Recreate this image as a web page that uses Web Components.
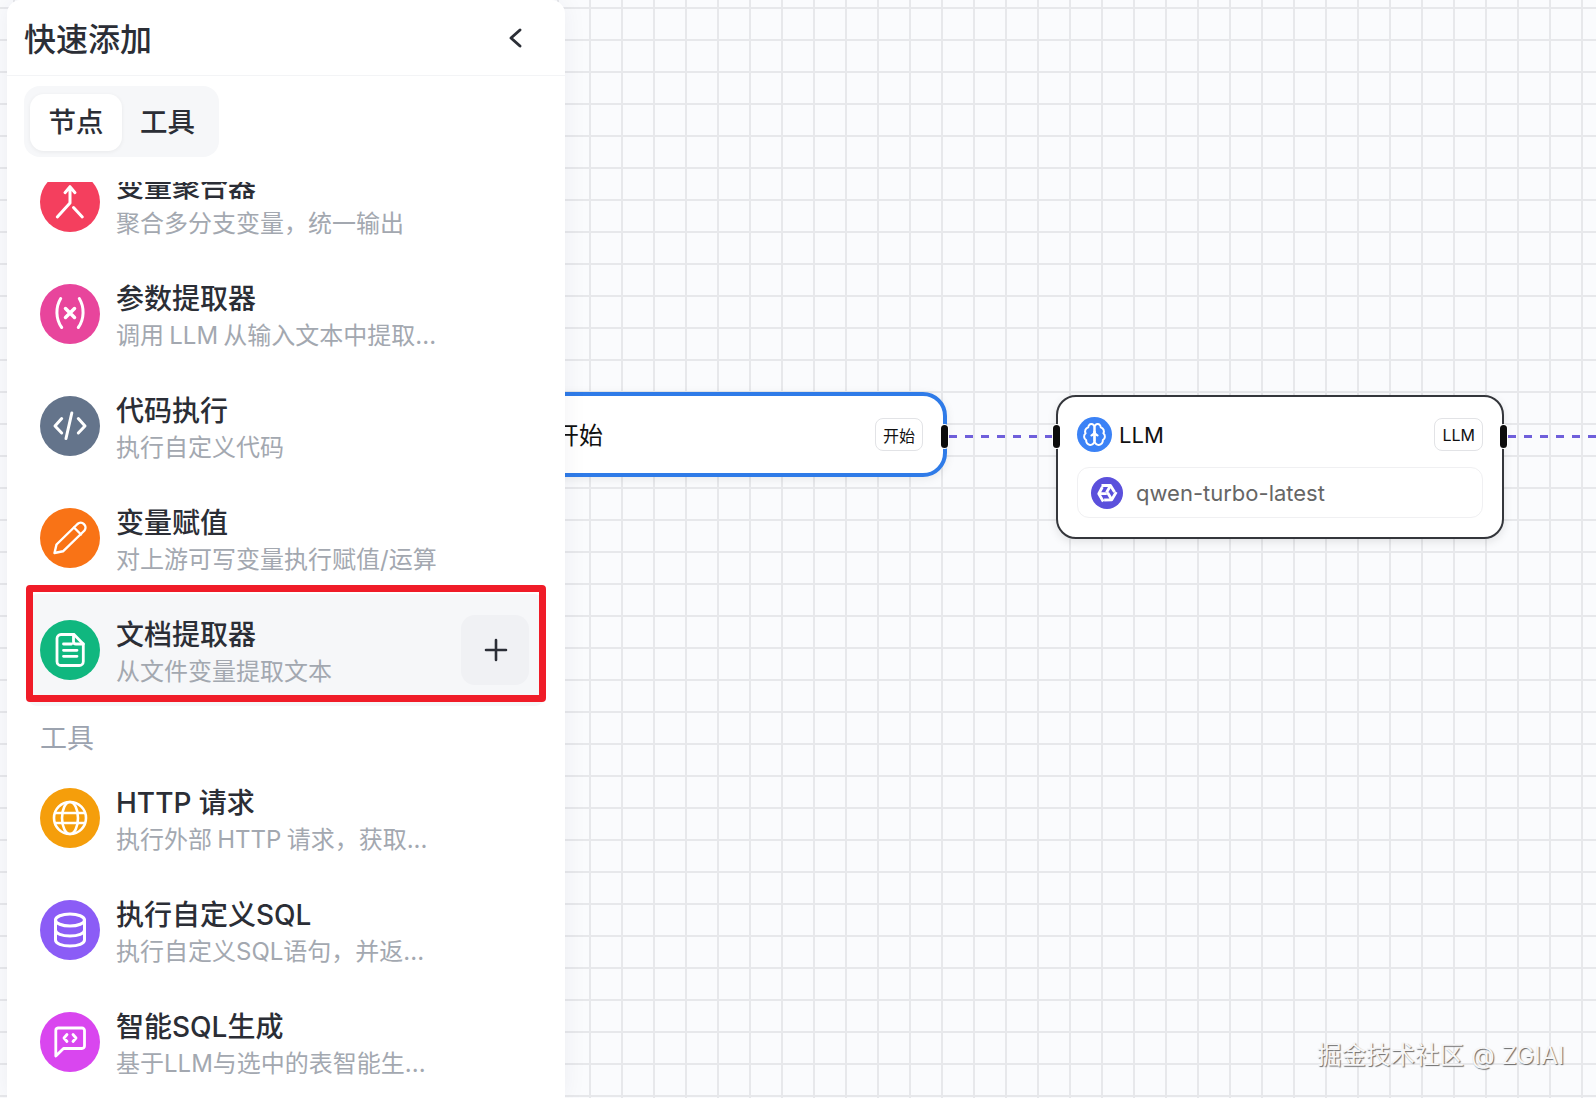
<!DOCTYPE html>
<html lang="zh">
<head>
<meta charset="utf-8">
<title>快速添加</title>
<style>
  html, body { margin: 0; height: 100%; overflow: hidden; }
  body { font-family: Inter, "Noto Sans CJK SC", sans-serif; }
</style>
</head>
<body>
<flow-app>
  <quick-panel slot="panel" heading="快速添加">
    <node-row name="变量聚合器" desc="聚合多分支变量，统一输出" color="#f43f5e" icon="merge"></node-row>
    <node-row name="参数提取器" desc="调用 LLM 从输入文本中提取..." color="#e8459c" icon="params"></node-row>
    <node-row name="代码执行" desc="执行自定义代码" color="#64748b" icon="code"></node-row>
    <node-row name="变量赋值" desc="对上游可写变量执行赋值/运算" color="#f97316" icon="pencil"></node-row>
    <node-row name="文档提取器" desc="从文件变量提取文本" color="#10b77f" icon="doc" active></node-row>
    <section-label>工具</section-label>
    <node-row name="HTTP 请求" desc="执行外部 HTTP 请求，获取..." color="#f59e0b" icon="globe"></node-row>
    <node-row name="执行自定义SQL" desc="执行自定义SQL语句，并返..." color="#8b5cf6" icon="db"></node-row>
    <node-row name="智能SQL生成" desc="基于LLM与选中的表智能生..." color="#d946ef" icon="chat"></node-row>
  </quick-panel>
</flow-app>

<script>
const ROW_ICONS = {
  merge: '<path d="M25 20.7 30 14.7 35 20.7M30 15V31L17.3 45M33.5 35.5 42.3 45"/>',
  params: '<path d="M20.7 14.5C15.5 23 15.5 35 21.7 43.5M39.3 14.5C44.5 23 44.5 35 38.3 43.5"/><path stroke-width="3.5" d="M25.5 24.5 34.5 33.5M34.5 24.5 25.5 33.5"/>',
  code: '<path d="M21.7 22.5 15 30 21.7 37M38.3 22.5 45 30 38.3 37M31.8 17 26 42.5"/>',
  pencil: '<path stroke-width="2.4" d="M14.5 45 16.5 36.5 37.5 16A4.8 4.8 0 0 1 44.5 22.5L23 43.3Z"/><path stroke-width="2.4" d="M34 19.5 41 26.5"/>',
  doc: '<path stroke-width="2.8" d="M21 14.5H34L43.3 24V41.5A4 4 0 0 1 39.3 45.5H21A4 4 0 0 1 17 41.5V18.5A4 4 0 0 1 21 14.5Z"/><path stroke-width="2.8" d="M33.5 14.5V21.5A2.5 2.5 0 0 0 36 24H43.3M23.5 24H31.5M23.5 30.3H37M23.5 36.3H37"/>',
  globe: '<g stroke-width="2.6"><circle cx="30" cy="30" r="16"/><ellipse cx="30" cy="30" rx="8" ry="16"/><path d="M15 25H45M15 35H45"/></g>',
  db: '<ellipse cx="30" cy="20" rx="14.5" ry="6"/><path d="M15.5 20V40C15.5 43.5 22 46 30 46S44.5 43.5 44.5 40V20M15.5 30C15.5 33.5 22 36 30 36S44.5 33.5 44.5 30"/>',
  chat: '<path stroke-width="2.8" d="M18 16H42A2.5 2.5 0 0 1 44.5 18.5V34A2.5 2.5 0 0 1 42 36.5H23.5L15.8 44V18.5A2.5 2.5 0 0 1 18 16Z"/><path stroke-width="2.8" d="M27 22.5 24 26 27 29.5M33 22.5 36 26 33 29.5"/>'
};

class FlowApp extends HTMLElement {
  constructor () {
    super();
    this.attachShadow({ mode: 'open' });
  }

  static get styles () {
    return `
      :host {
        display: flex;
        position: relative;
        width: 100%;
        height: 1098px;
        overflow: hidden;
        padding-left: 7px;
        box-sizing: border-box;
        background-color: #fafbfd;
        background-image:
          linear-gradient(#e7e8eb 2px, transparent 2px),
          linear-gradient(90deg, #e7e8eb 2px, transparent 2px);
        background-size: 32px 32px;
        background-position: 13px 7px;
      }
      .edge {
        position: absolute;
        top: 435px;
        height: 3px;
        background: repeating-linear-gradient(90deg, #6f5fdb 0 8px, transparent 8px 16px);
      }
      .watermark {
        position: absolute;
        left: 1317px;
        top: 1039px;
        font-size: 24.5px;
        line-height: 32px;
        color: #f6f6f7;
        text-shadow: 1px 1px 1px #6b6b6b;
        white-space: nowrap;
      }
    `;
  }

  connectedCallback () {
    this.render();
  }

  render () {
    this.shadowRoot.innerHTML = `
    <style>${FlowApp.styles}</style>
    <div class="edge" style="left: 949px; width: 104px"></div>
    <div class="edge" style="left: 1508px; width: 90px"></div>
    <start-node></start-node>
    <llm-node></llm-node>
    <slot name="panel"></slot>
    <div class="watermark">掘金技术社区 @ ZGIAI</div>
    `;
  }
}

class FlowTag extends HTMLElement {
  constructor () {
    super();
    this.attachShadow({ mode: 'open' });
  }

  connectedCallback () {
    this.shadowRoot.innerHTML = `
    <style>
      :host {
        display: flex;
        align-items: center;
        justify-content: center;
        height: 33px;
        padding: 0 7px;
        box-sizing: border-box;
        border: 1.5px solid #e2e3e6;
        border-radius: 8px;
        background: #fff;
        color: #111;
        font-size: 16px;
      }
    </style>
    <slot></slot>
    `;
  }
}

class StartNode extends HTMLElement {
  constructor () {
    super();
    this.attachShadow({ mode: 'open' });
  }

  connectedCallback () {
    this.shadowRoot.innerHTML = `
    <style>
      :host {
        position: absolute;
        left: 400px;
        top: 392px;
        width: 547px;
        height: 85px;
        box-sizing: border-box;
        display: flex;
        align-items: center;
        justify-content: space-between;
        padding: 0 20px 0 151px;
        background: #fff;
        border: 4px solid #2f7be8;
        border-radius: 24px;
        box-shadow: 0 2px 10px rgba(0, 0, 0, .08);
        font-size: 24px;
        color: #111;
      }
      span { margin-top: -3px; }
      .handle {
        position: absolute;
        right: -5px;
        top: 29px;
        width: 7px;
        height: 23px;
        background: #0c0c0c;
        border-radius: 4px;
        box-shadow: 0 0 0 1px #fff;
      }
    </style>
    <span>开始</span>
    <flow-tag>开始</flow-tag>
    <div class="handle"></div>
    `;
  }
}

class LlmNode extends HTMLElement {
  constructor () {
    super();
    this.attachShadow({ mode: 'open' });
  }

  connectedCallback () {
    this.shadowRoot.innerHTML = `
    <style>
      :host {
        position: absolute;
        left: 1056px;
        top: 395px;
        width: 448px;
        height: 144px;
        box-sizing: border-box;
        padding: 20px 19px 0;
        background: #fff;
        border: 2px solid #34363b;
        border-radius: 20px;
        box-shadow: 0 3px 10px rgba(0, 0, 0, .1);
        color: #111;
      }
      .head { display: flex; align-items: center; height: 35px; }
      .brain {
        width: 35px;
        height: 35px;
        border-radius: 50%;
        background: #3b82f6;
        display: flex;
        align-items: center;
        justify-content: center;
      }
      .title { margin-left: 7px; flex: 1; font-size: 22px; }
      .model {
        display: flex;
        align-items: center;
        gap: 13px;
        height: 51px;
        margin-top: 15px;
        padding: 0 0 0 13px;
        box-sizing: border-box;
        border: 1.5px solid #f0f0f2;
        border-radius: 12px;
        color: #666;
        font-size: 22px;
      }
      .handle {
        position: absolute;
        top: 28px;
        width: 7px;
        height: 23px;
        background: #0c0c0c;
        border-radius: 4px;
        box-shadow: 0 0 0 1px #fff;
      }
    </style>
    <div class="head">
      <div class="brain">
        <svg width="25" height="25" viewBox="0 0 24 24" fill="none" stroke="#fff" stroke-width="1.9" stroke-linecap="round" stroke-linejoin="round">
          <path d="M12 5a3 3 0 1 0-5.997.125 4 4 0 0 0-2.526 5.77 4 4 0 0 0 .556 6.588A4 4 0 1 0 12 18Z"/>
          <path d="M12 5a3 3 0 1 1 5.997.125 4 4 0 0 1 2.526 5.77 4 4 0 0 1-.556 6.588A4 4 0 1 1 12 18Z"/>
          <path d="M15 13a4.5 4.5 0 0 1-3-4 4.5 4.5 0 0 1-3 4"/>
          <path d="M12 9V18"/>
        </svg>
      </div>
      <span class="title">LLM</span>
      <flow-tag>LLM</flow-tag>
    </div>
    <div class="model">
      <svg width="32" height="32" viewBox="0 0 32 32">
        <circle cx="16" cy="16" r="16" fill="#5b50dc"/>
        <g fill="none" stroke="#fff" stroke-width="2.8" stroke-linejoin="round">
          <path d="M10.5 8.5H19.5L23.5 15M19.5 8.5 15.5 15.5"/>
          <path d="M10.5 8.5H19.5L23.5 15M19.5 8.5 15.5 15.5" transform="rotate(120 16 16)"/>
          <path d="M10.5 8.5H19.5L23.5 15M19.5 8.5 15.5 15.5" transform="rotate(240 16 16)"/>
        </g>
      </svg>
      <span>qwen-turbo-latest</span>
    </div>
    <div class="handle" style="left: -5px"></div>
    <div class="handle" style="right: -5px"></div>
    `;
  }
}

class QuickPanel extends HTMLElement {
  constructor () {
    super();
    this.attachShadow({ mode: 'open' });
  }

  static get styles () {
    return `
      :host {
        position: relative;
        z-index: 2;
        display: flex;
        flex-direction: column;
        width: 558px;
        height: 100%;
        background: #fff;
        border-radius: 14px 14px 0 0;
        box-shadow: 0 0 24px rgba(20, 30, 60, .06);
      }
      header {
        flex: none;
        display: flex;
        align-items: center;
        justify-content: space-between;
        height: 76px;
        padding: 0 42px 2px 18px;
        box-sizing: border-box;
        border-bottom: 1.5px solid #f3f4f6;
        font-size: 32px;
        font-weight: 500;
        color: #2b2e36;
      }
      header span { margin-left: -1px; }
      header svg { margin-top: 2px; }
      .tabs {
        flex: none;
        align-self: flex-start;
        display: flex;
        margin: 10px 0 0 17px;
        padding: 8px 6px;
        height: 71px;
        box-sizing: border-box;
        border-radius: 16px;
        background: #f6f7f9;
        font-size: 27.5px;
        font-weight: 500;
        color: #2b2e36;
      }
      .tab {
        display: flex;
        align-items: center;
        justify-content: center;
        width: 92px;
        height: 57px;
        border-radius: 14px;
        line-height: 1;
      }
      .tab.on {
        background: #fff;
        box-shadow: 0 1px 4px rgba(0, 0, 0, .06);
      }
      .tab + .tab { width: 91px; }
      .list {
        flex: 1;
        min-height: 0;
        margin-top: 25px;
        overflow: hidden;
      }
      /* scrolled part way down the list, same as the reference */
      .scroller {
        display: flex;
        flex-direction: column;
        margin-top: -36px;
        padding: 0 19px;
      }
    `;
  }

  connectedCallback () {
    this.render();
  }

  render () {
    this.shadowRoot.innerHTML = `
    <style>${QuickPanel.styles}</style>
    <header>
      <span>${this.getAttribute('heading')}</span>
      <svg width="16" height="22" viewBox="0 0 16 22" fill="none" stroke="#2b2e36" stroke-width="3" stroke-linecap="round" stroke-linejoin="round">
        <path d="M13 3 4 11 13 19"/>
      </svg>
    </header>
    <div class="tabs">
      <div class="tab on">节点</div>
      <div class="tab">工具</div>
    </div>
    <div class="list"><div class="scroller"><slot></slot></div></div>
    `;
  }
}

class SectionLabel extends HTMLElement {
  constructor () {
    super();
    this.attachShadow({ mode: 'open' });
  }

  connectedCallback () {
    this.shadowRoot.innerHTML = `
    <style>
      :host {
        display: flex;
        align-items: center;
        height: 56px;
        padding: 4px 0 0 14px;
        box-sizing: border-box;
        font-size: 27px;
        color: #9ca3af;
      }
    </style>
    <slot></slot>
    `;
  }
}

class NodeRow extends HTMLElement {
  constructor () {
    super();
    this.attachShadow({ mode: 'open' });
  }

  static get styles () {
    return `
      :host {
        position: relative;
        display: flex;
        align-items: center;
        height: 112px;
        padding: 0 14px;
        box-sizing: border-box;
      }
      :host([active]) {
        background: #f6f7f9;
        border-radius: 12px;
      }
      .dot {
        flex: none;
        width: 60px;
        height: 60px;
        border-radius: 50%;
      }
      svg { display: block; }
      .text { margin-left: 16px; padding-top: 5px; flex: 1; min-width: 0; }
      .name {
        font-size: 28px;
        font-weight: 500;
        line-height: 36px;
        color: #2b2e36;
        white-space: nowrap;
      }
      .desc {
        margin-top: 2px;
        font-size: 24px;
        word-spacing: -1.5px;
        line-height: 34px;
        color: #a3a8b0;
        white-space: nowrap;
      }
      .add {
        flex: none;
        width: 68px;
        height: 70px;
        margin-right: 3px;
        border-radius: 14px;
        background: #f0f1f4;
        display: flex;
        align-items: center;
        justify-content: center;
      }
      .add svg { margin-left: 2px; }
      .mark {
        position: absolute;
        left: 0;
        right: 0;
        top: -9px;
        bottom: 4px;
        border: 7.5px solid #f01c28;
        border-radius: 4px;
        pointer-events: none;
      }
    `;
  }

  connectedCallback () {
    this.render();
  }

  render () {
    const active = this.hasAttribute('active');
    this.shadowRoot.innerHTML = `
    <style>${NodeRow.styles}</style>
    <div class="dot" style="background: ${this.getAttribute('color')}">
      <svg width="60" height="60" viewBox="0 0 60 60" fill="none" stroke="#fff" stroke-width="3" stroke-linecap="round" stroke-linejoin="round">
        ${ROW_ICONS[this.getAttribute('icon')]}
      </svg>
    </div>
    <div class="text">
      <div class="name">${this.getAttribute('name')}</div>
      <div class="desc">${this.getAttribute('desc')}</div>
    </div>
    ${active ? `
    <div class="add">
      <svg width="24" height="24" viewBox="0 0 24 24" fill="none" stroke="#2b2e36" stroke-width="2.6" stroke-linecap="round">
        <path d="M12 2V22M2 12H22"/>
      </svg>
    </div>
    <div class="mark"></div>` : ''}
    `;
  }
}

customElements.define('flow-app', FlowApp);
customElements.define('flow-tag', FlowTag);
customElements.define('start-node', StartNode);
customElements.define('llm-node', LlmNode);
customElements.define('quick-panel', QuickPanel);
customElements.define('section-label', SectionLabel);
customElements.define('node-row', NodeRow);
</script>
</body>
</html>
